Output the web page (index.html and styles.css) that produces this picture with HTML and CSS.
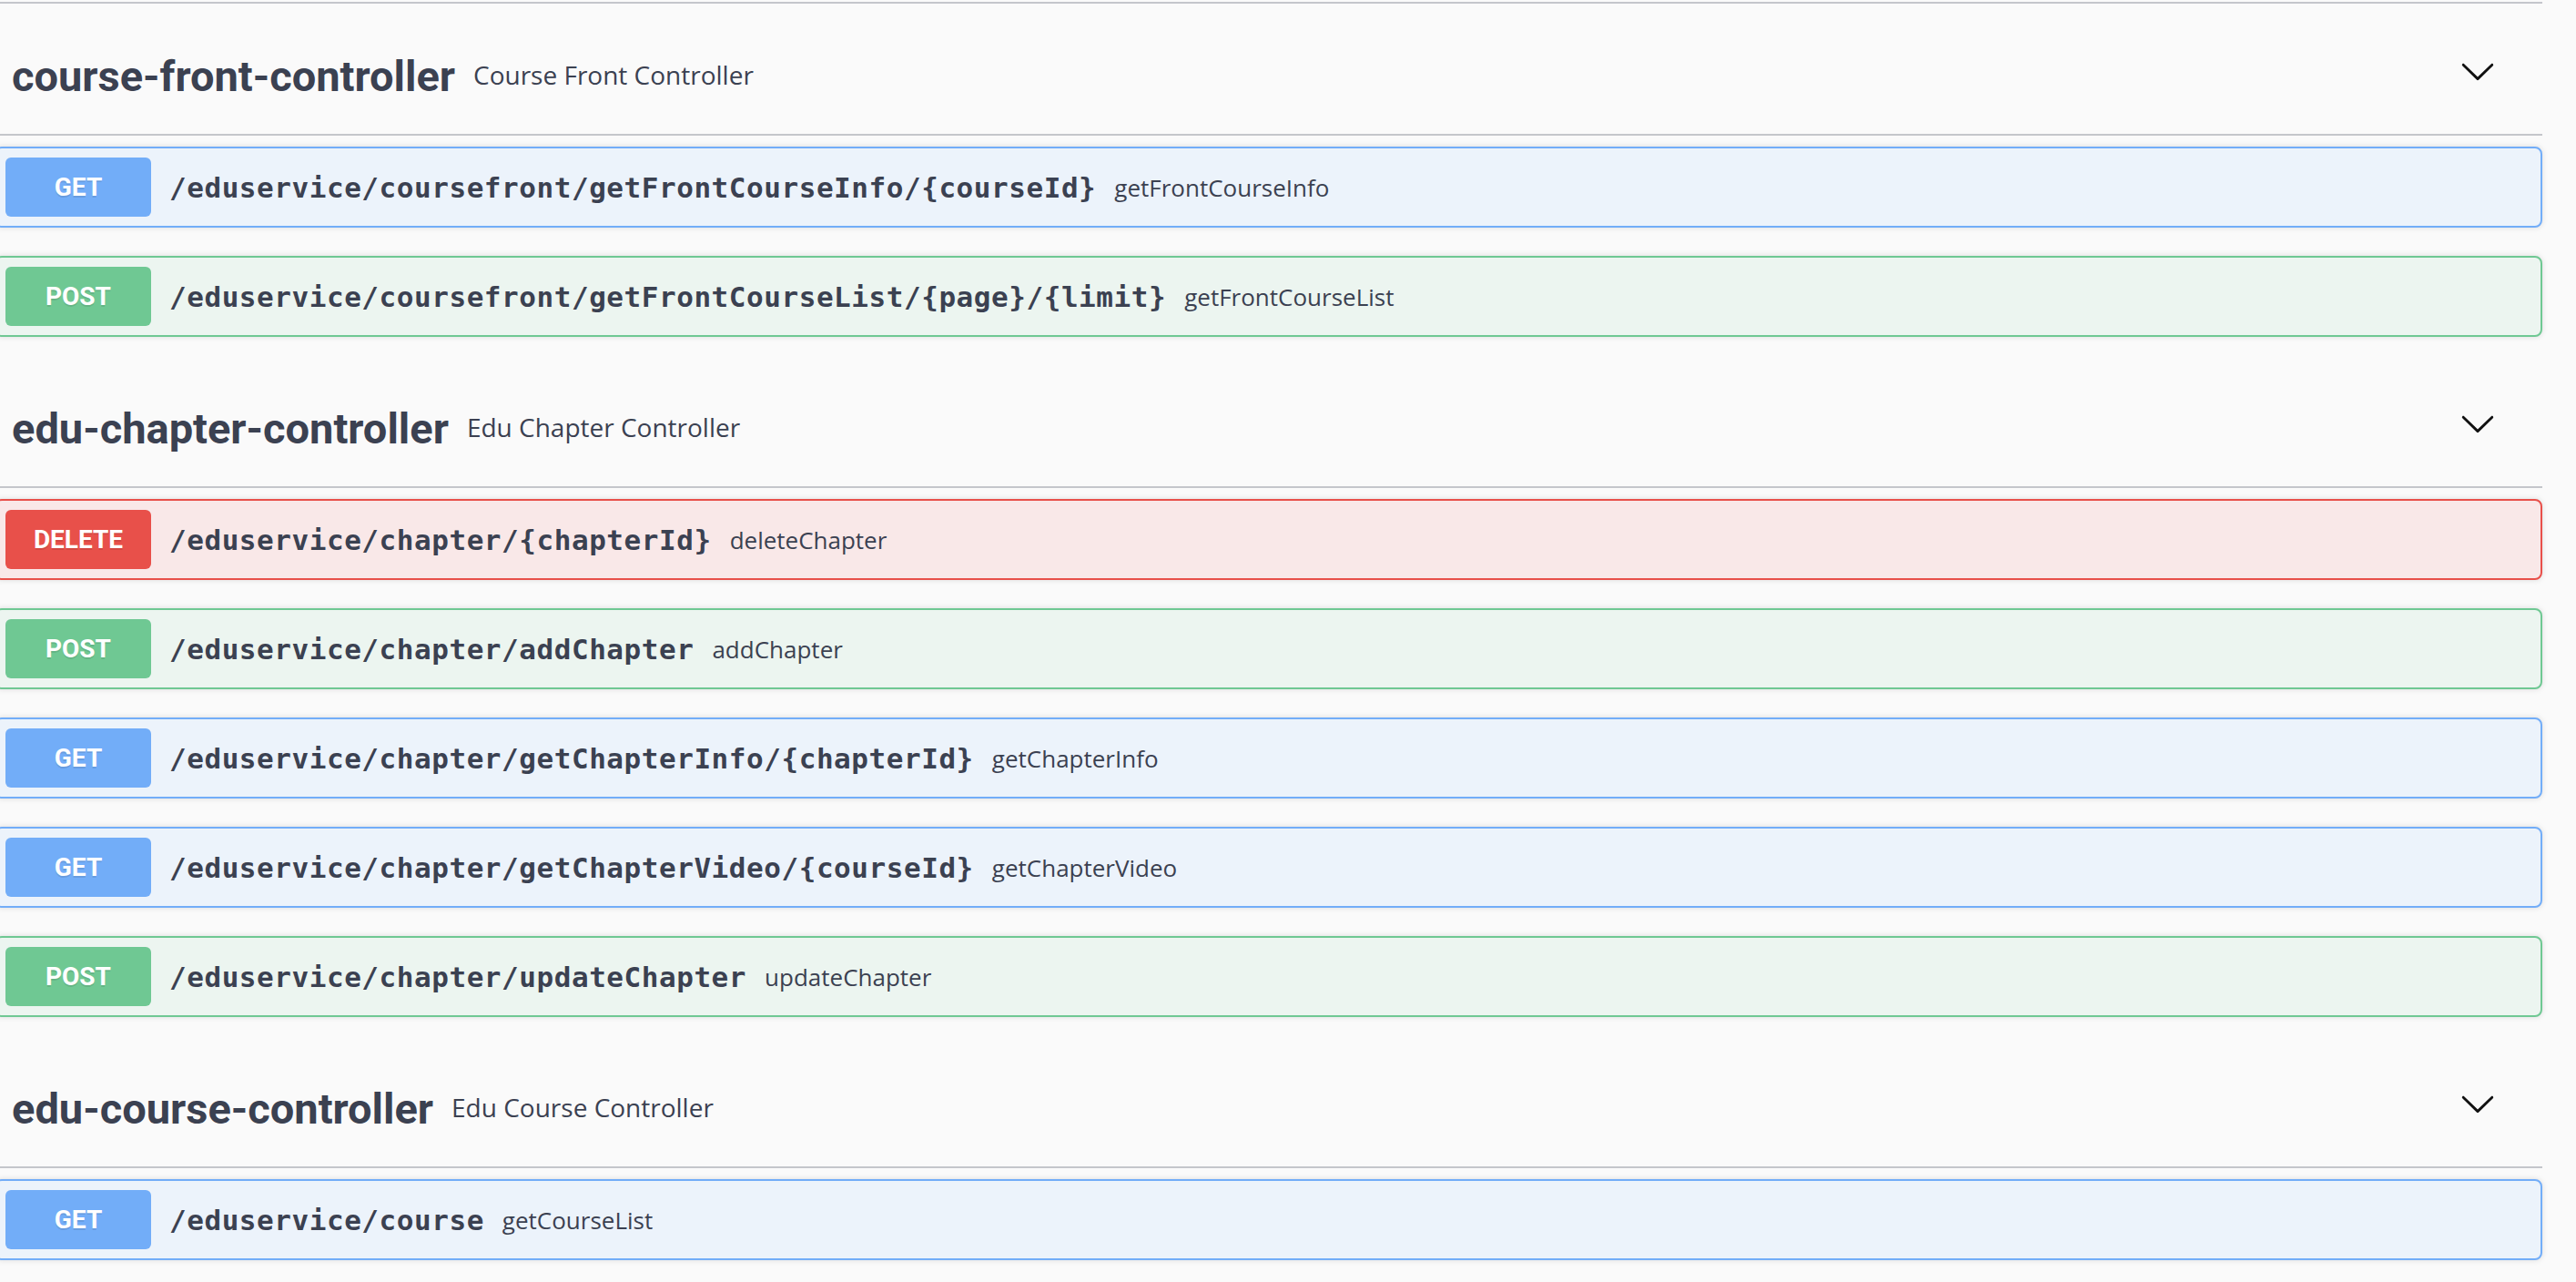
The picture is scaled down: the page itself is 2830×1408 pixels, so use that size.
FILE: index.html
```html
<!DOCTYPE html>
<html lang="en">
<head>
<meta charset="utf-8">
<title>Swagger UI</title>
<link rel="stylesheet" href="styles.css">
</head>
<body>
<div class="wrapper">
  <div class="prev-tag"></div>

  <section class="tag-section">
    <h3 class="opblock-tag">
      <span class="tag-name">course-front-controller</span>
      <small class="tag-desc">Course Front Controller</small>
      <svg class="arrow" width="40" height="40" viewBox="0 0 20 20"><path d="M17.418 6.109c.272-.268.709-.268.979 0s.271.701 0 .969l-7.908 7.83c-.27.268-.707.268-.979 0l-7.908-7.830c-.27-.268-.27-.701 0-.969.271-.268.709-.268.979 0L10 13.25l7.418-7.141z"/></svg>
    </h3>
    <div class="opblock get">
      <span class="method">GET</span>
      <span class="path">/eduservice/coursefront/getFrontCourseInfo/{courseId}</span>
      <span class="summary">getFrontCourseInfo</span>
    </div>
    <div class="opblock post">
      <span class="method">POST</span>
      <span class="path">/eduservice/coursefront/getFrontCourseList/{page}/{limit}</span>
      <span class="summary">getFrontCourseList</span>
    </div>
  </section>

  <section class="tag-section">
    <h3 class="opblock-tag">
      <span class="tag-name">edu-chapter-controller</span>
      <small class="tag-desc">Edu Chapter Controller</small>
      <svg class="arrow" width="40" height="40" viewBox="0 0 20 20"><path d="M17.418 6.109c.272-.268.709-.268.979 0s.271.701 0 .969l-7.908 7.83c-.27.268-.707.268-.979 0l-7.908-7.830c-.27-.268-.27-.701 0-.969.271-.268.709-.268.979 0L10 13.25l7.418-7.141z"/></svg>
    </h3>
    <div class="opblock delete">
      <span class="method">DELETE</span>
      <span class="path">/eduservice/chapter/{chapterId}</span>
      <span class="summary">deleteChapter</span>
    </div>
    <div class="opblock post">
      <span class="method">POST</span>
      <span class="path">/eduservice/chapter/addChapter</span>
      <span class="summary">addChapter</span>
    </div>
    <div class="opblock get">
      <span class="method">GET</span>
      <span class="path">/eduservice/chapter/getChapterInfo/{chapterId}</span>
      <span class="summary">getChapterInfo</span>
    </div>
    <div class="opblock get">
      <span class="method">GET</span>
      <span class="path">/eduservice/chapter/getChapterVideo/{courseId}</span>
      <span class="summary">getChapterVideo</span>
    </div>
    <div class="opblock post">
      <span class="method">POST</span>
      <span class="path">/eduservice/chapter/updateChapter</span>
      <span class="summary">updateChapter</span>
    </div>
  </section>

  <section class="tag-section">
    <h3 class="opblock-tag">
      <span class="tag-name">edu-course-controller</span>
      <small class="tag-desc">Edu Course Controller</small>
      <svg class="arrow" width="40" height="40" viewBox="0 0 20 20"><path d="M17.418 6.109c.272-.268.709-.268.979 0s.271.701 0 .969l-7.908 7.83c-.27.268-.707.268-.979 0l-7.908-7.830c-.27-.268-.27-.701 0-.969.271-.268.709-.268.979 0L10 13.25l7.418-7.141z"/></svg>
    </h3>
    <div class="opblock get">
      <span class="method">GET</span>
      <span class="path">/eduservice/course</span>
      <span class="summary">getCourseList</span>
    </div>
  </section>
</div>
</body>
</html>
```

FILE: styles.css
```css
html, body {
  margin: 0;
  padding: 0;
  background: #fafafa;
  overflow: hidden;
}

body {
  width: 2830px;
  height: 1408px;
  color: #3b4151;
  font-family: "Open Sans", "Noto Sans", sans-serif;
}

.wrapper {
  margin-left: -6px;
  width: 2799px;
  display: flex;
  flex-direction: column;
}

.prev-tag {
  margin-top: 2px;
  border-bottom: 2px solid #c4c6cb;
  margin-bottom: 10px;
}

.tag-section {
  display: flex;
  flex-direction: column;
}

.opblock-tag {
  display: flex;
  align-items: center;
  box-sizing: border-box;
  height: 135px;
  margin: 0 0 12px;
  padding: 0 51px 0 19px;
  border-bottom: 2px solid #c4c6cb;
  color: #3b4151;
  font-weight: normal;
}

.tag-name {
  font-family: Roboto, "Open Sans", sans-serif;
  font-weight: 700;
  font-size: 47px;
  line-height: 73px;
  margin-top: 6px;
  white-space: nowrap;
}

.tag-desc {
  flex: 1;
  padding: 0 20px;
  font-family: "Open Sans", sans-serif;
  font-size: 28px;
  line-height: 40px;
  margin-top: 2px;
  white-space: nowrap;
}

.arrow {
  flex: none;
  margin-bottom: 5px;
  fill: #111;
}

.opblock {
  display: flex;
  align-items: center;
  box-sizing: border-box;
  height: 89px;
  margin: 0 0 31px;
  padding: 0 10px;
  border: 2px solid #000;
  border-radius: 8px;
  box-shadow: 0 0 6px rgba(0, 0, 0, 0.13);
}

.method {
  flex: none;
  width: 160px;
  height: 65px;
  display: flex;
  align-items: center;
  justify-content: center;
  border-radius: 6px;
  color: #fff;
  font-family: Roboto, "Open Sans", sans-serif;
  font-weight: 700;
  font-size: 28px;
  text-shadow: 0 2px 0 rgba(0, 0, 0, 0.1);
}

.path {
  padding: 0 20px;
  font-family: "DejaVu Sans Mono", "Liberation Mono", monospace;
  font-weight: 700;
  font-size: 31px;
  letter-spacing: 0.55px;
  color: #3b4151;
  white-space: nowrap;
}

.summary {
  flex: 1 1 auto;
  font-family: "Open Sans", sans-serif;
  font-size: 26px;
  color: #3b4151;
  white-space: nowrap;
}

.opblock.get {
  border-color: #72adf8;
  background: #ecf3fb;
}
.opblock.get .method {
  background: #72adf8;
}

.opblock.post {
  border-color: #6fc893;
  background: #ecf5f0;
}
.opblock.post .method {
  background: #6fc893;
}

.opblock.delete {
  border-color: #e8504a;
  background: #f9e8e8;
}
.opblock.delete .method {
  background: #e8504a;
}
```
